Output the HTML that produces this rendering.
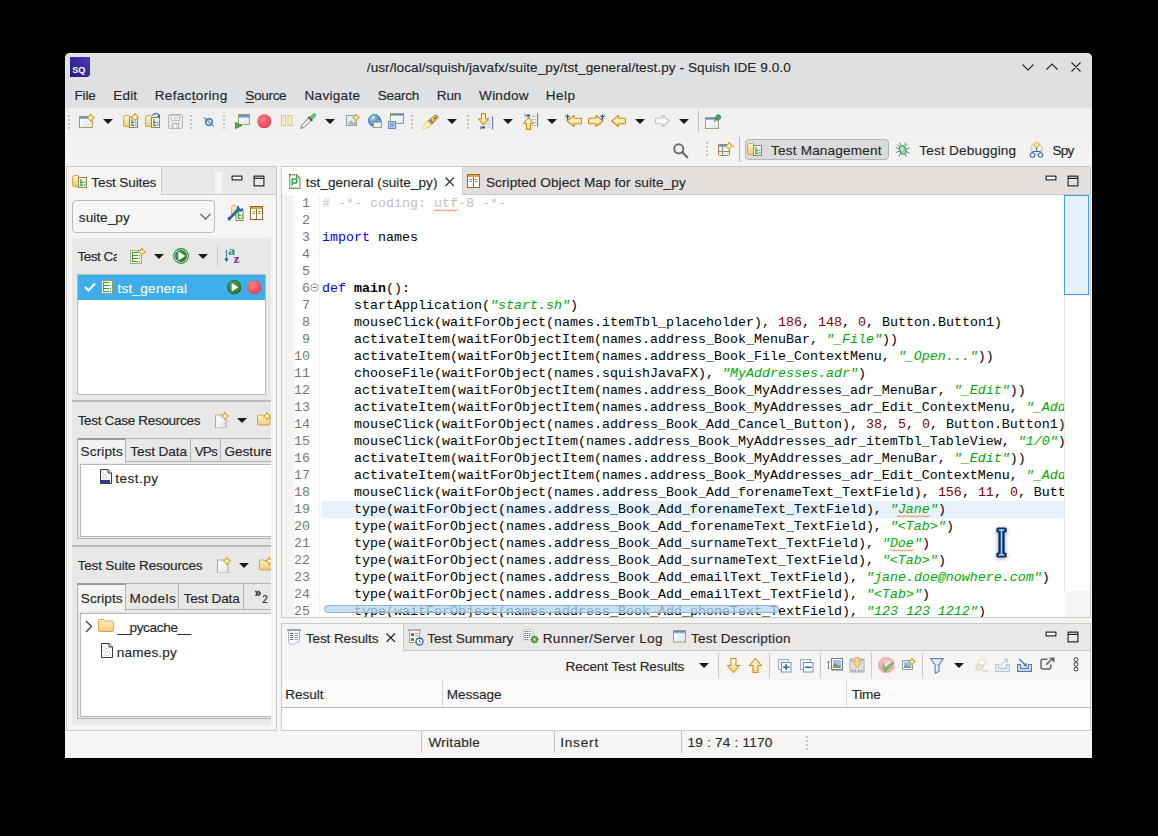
<!DOCTYPE html>
<html><head><meta charset="utf-8"><title>Squish IDE</title>
<style>*{box-sizing:border-box;margin:0;padding:0}
html,body{width:1158px;height:836px;background:#000;overflow:hidden}
body{position:relative;font-family:"Liberation Sans",sans-serif;font-size:13.6px;color:#232629}
.a{position:absolute}
.t{position:absolute;white-space:nowrap;line-height:20px;height:20px;font-size:13.6px;-webkit-text-stroke:.12px currentColor}
#win{left:65px;top:53px;width:1027px;height:705px;background:#f6f5f4;border-radius:5px 5px 0 0;overflow:hidden}
#tbar{left:0;top:0;width:1027px;height:55px;background:#dee0e2}
#tool{left:0;top:55px;width:1027px;height:58px;background:linear-gradient(#efeff0,#f5f4f3)}
.pane{border:1px solid #cfc9c4;background:#f6f5f4}
.hdr{background:#e9e8e6;border-bottom:1px solid #cfc9c4}
.mono{font-family:"Liberation Mono",monospace;font-size:13.333px}
#code{left:322px;top:195px;width:742px;height:422px;overflow:hidden}
#code div{height:17px;line-height:17px;white-space:pre;color:#000}
#ln{left:290px;top:195px;width:20px;height:422px;overflow:hidden;text-align:right;color:#787878}
#ln div{height:17px;line-height:17px}
.k{color:#0000ff}.s{color:#00aa00;font-style:italic}.n{color:#800000}.c{color:#c0c0c0}
.sq{}
u{text-underline-offset:1.5px}
.clip{position:absolute;overflow:hidden}
</style></head><body>
<svg width="0" height="0" style="position:absolute"><defs>
<linearGradient id="gb" x1="0" y1="0" x2="0" y2="1"><stop offset="0" stop-color="#3f7fc9"/><stop offset="1" stop-color="#a9cbee"/></linearGradient>
<linearGradient id="gw" x1="0" y1="0" x2="1" y2="1"><stop offset="0" stop-color="#ffffff"/><stop offset="1" stop-color="#dbe7f5"/></linearGradient>
<linearGradient id="gf" x1="0" y1="0" x2="0" y2="1"><stop offset="0" stop-color="#fdf1cc"/><stop offset="1" stop-color="#f2cb7a"/></linearGradient>
<linearGradient id="gy" x1="0" y1="0" x2="0" y2="1"><stop offset="0" stop-color="#fffdf0"/><stop offset="1" stop-color="#fbdb8a"/></linearGradient>
<radialGradient id="gr" cx="0.4" cy="0.35" r="0.7"><stop offset="0" stop-color="#f7848c"/><stop offset="1" stop-color="#e63c4a"/></radialGradient>
<radialGradient id="gg" cx="0.4" cy="0.35" r="0.7"><stop offset="0" stop-color="#4fa653"/><stop offset="1" stop-color="#1f7230"/></radialGradient>
<radialGradient id="gl" cx="0.35" cy="0.3" r="0.8"><stop offset="0" stop-color="#9fd0f5"/><stop offset="1" stop-color="#2d6fb8"/></radialGradient>
</defs></svg>
<div id="win" class="a">
 <div id="tbar" class="a"></div>
 <div id="tool" class="a"></div>
</div>
<svg class="a" style="left:70px;top:57px;" width="20" height="20" viewBox="0 0 20 20"><defs><linearGradient id="gsq" x1="1" y1="0" x2="0" y2="1"><stop offset="0" stop-color="#4a3bb0"/><stop offset="1" stop-color="#2a1488"/></linearGradient></defs><path d="M0 0h20v18l-2 2H0z" fill="url(#gsq)"/><text x="2.300" y="16.300" font-family="Liberation Sans" font-weight="bold" font-size="9.200" fill="#fff" letter-spacing="-.2">SQ</text></svg>
<div class="t" style="left:366.80px;top:58px;letter-spacing:0.054px;">/usr/local/squish/javafx/suite_py/tst_general/test.py - Squish IDE 9.0.0</div>
<svg class="a" style="left:1020px;top:60px" width="64" height="14" viewBox="0 0 64 14"><path d="M2.500 4.500L8 10L13.500 4.500M26.500 9.500L32 4L37.500 9.500M51.500 2.500L60.500 11.500M60.500 2.500L51.500 11.500" fill="none" stroke="#232629" stroke-width="1.100"/></svg>
<div class="t" style="left:74.50px;top:86px;letter-spacing:-0.217px;">File</div>
<div class="t" style="left:113.30px;top:86px;letter-spacing:0.117px;">Edit</div>
<div class="t" style="left:154.70px;top:86px;letter-spacing:0.305px;">Refac<u>t</u>oring</div>
<div class="t" style="left:245.30px;top:86px;letter-spacing:-0.34px;"><u>S</u>ource</div>
<div class="t" style="left:304.50px;top:86px;letter-spacing:0.271px;">Navigate</div>
<div class="t" style="left:377.65px;top:86px;letter-spacing:-0.28px;">Search</div>
<div class="t" style="left:436.70px;top:86px;letter-spacing:-0.1px;">Run</div>
<div class="t" style="left:479.10px;top:86px;letter-spacing:0.21px;">Window</div>
<div class="t" style="left:545.70px;top:86px;letter-spacing:0.5px;">Help</div>
<!--TOOLBAR-->
<svg class="a" style="left:68px;top:114.5px;" width="2" height="16" viewBox="0 0 2 16"><rect x="0" y="0" width="2" height="2" fill="#cdc3b3"/><rect x="0" y="4" width="2" height="2" fill="#cdc3b3"/><rect x="0" y="8" width="2" height="2" fill="#cdc3b3"/><rect x="0" y="12" width="2" height="2" fill="#cdc3b3"/></svg><svg class="a" style="left:79px;top:113px;" width="16" height="16" viewBox="0 0 16 16"><rect x="0.5" y="3.5" width="13" height="11" fill="url(#gw)" stroke="#ad976c"/><rect x="1" y="4" width="12" height="2" fill="url(#gb)"/><path d="M4 14C9 13.500 12.500 11 13 7" fill="none" stroke="#f5dc8a" stroke-width="1.400" opacity=".85"/><path d="M11.7 1.1999999999999997Q12.708 3.792 15.299999999999999 4.8Q12.708 5.808 11.7 8.4Q10.691999999999998 5.808 8.1 4.8Q10.691999999999998 3.792 11.7 1.1999999999999997Z" fill="#fffdf0" stroke="#d6a420" stroke-width="1.100" stroke-linejoin="round"/></svg><svg class="a" style="left:103.0px;top:119.3px;" width="10" height="5" viewBox="0 0 10 5"><path d="M0 0H10L5.0 5Z" fill="#1a1a1a"/></svg><svg class="a" style="left:123px;top:113px;" width="16" height="16" viewBox="0 0 16 16"><path d="M0.5 4.5q0-2 2-2h2.500q2 0 2 2v.300h.500v7.200q0 1.500-1.500 1.500h-4q-1.500 0-1.500-1.500z" fill="url(#gf)" stroke="#d9a045"/><path d="M1.5 5h5" stroke="#fff6dc" stroke-width="1"/><rect x="6.5" y="4.5" width="8" height="10" fill="url(#gw)" stroke="#9c8742"/><path d="M8.9 6v6.3h2.300M8.9 9.3h2.300" stroke="#2f9e44" stroke-width="1.200" fill="none"/><rect x="12.2" y="8.7" width="1.100" height="1.200" fill="#2f9e44"/><rect x="12.2" y="11.1" width="1.100" height="1.200" fill="#2f9e44"/><path d="M12 0.2999999999999998Q13.036 2.9639999999999995 15.7 4Q13.036 5.0360000000000005 12 7.7Q10.964 5.0360000000000005 8.3 4Q10.964 2.9639999999999995 12 0.2999999999999998Z" fill="#fffdf0" stroke="#d6a420" stroke-width="1.100" stroke-linejoin="round"/></svg><svg class="a" style="left:145px;top:112px;" width="16" height="17" viewBox="0 0 16 17"><path d="M0.5 5.5q0-2 2-2h2.500q2 0 2 2v.300h.500v7.200q0 1.500-1.500 1.500h-4q-1.500 0-1.500-1.500z" fill="url(#gf)" stroke="#d9a045"/><path d="M1.5 6h5" stroke="#fff6dc" stroke-width="1"/><rect x="6.5" y="5.5" width="8" height="10" fill="url(#gw)" stroke="#9c8742"/><path d="M8.9 7v6.3h2.300M8.9 10.3h2.300" stroke="#2f9e44" stroke-width="1.200" fill="none"/><rect x="12.2" y="9.7" width="1.100" height="1.200" fill="#2f9e44"/><rect x="12.2" y="12.1" width="1.100" height="1.200" fill="#2f9e44"/><path d="M7.500 3.500q3-4 6.500-.5" fill="none" stroke="#3b6fb0" stroke-width="1.300"/><path d="M15.300 5.300l-3.300-.3 2.600-2.600z" fill="#274b85"/></svg><svg class="a" style="left:167.5px;top:114px;" width="15" height="15" viewBox="0 0 15 15"><path d="M.5 2q0-1.500 1.500-1.500h11q1.500 0 1.500 1.500v11q0 1.500-1.500 1.500h-11q-1.500 0-1.500-1.500z" fill="#e9e9e9" stroke="#b9b9b9"/><rect x="3.500" y="1.500" width="8" height="5" fill="#f7f7f7" stroke="#c2c2c2"/><path d="M5 3.500h5M5 5h5" stroke="#d0d0d0"/><rect x="4.500" y="9.500" width="6" height="5" fill="#dcdcdc" stroke="#b5b5b5"/><rect x="6" y="11" width="2" height="3" fill="#f4f4f4"/></svg><svg class="a" style="left:190px;top:114.5px;" width="2" height="16" viewBox="0 0 2 16"><rect x="0" y="0" width="2" height="2" fill="#cdc3b3"/><rect x="0" y="4" width="2" height="2" fill="#cdc3b3"/><rect x="0" y="8" width="2" height="2" fill="#cdc3b3"/><rect x="0" y="12" width="2" height="2" fill="#cdc3b3"/></svg>
<svg class="a" style="left:202.5px;top:115.5px;" width="12" height="12" viewBox="0 0 12 12"><circle cx="6" cy="6" r="3.300" fill="#cfe3f5" stroke="#3c78b5" stroke-width="1.500"/><path d="M1 1.500L11 10.500" stroke="#8a9098" stroke-width="1.300"/></svg><svg class="a" style="left:223px;top:114.5px;" width="2" height="16" viewBox="0 0 2 16"><rect x="0" y="0" width="2" height="2" fill="#cdc3b3"/><rect x="0" y="4" width="2" height="2" fill="#cdc3b3"/><rect x="0" y="8" width="2" height="2" fill="#cdc3b3"/><rect x="0" y="12" width="2" height="2" fill="#cdc3b3"/></svg><svg class="a" style="left:235px;top:113.5px;" width="15" height="15" viewBox="0 0 15 15"><rect x="3.5" y="0.5" width="11" height="10" fill="url(#gw)" stroke="#ad976c"/><rect x="4" y="1" width="10" height="3" fill="url(#gb)"/><path d="M.5 8.500L7 11.500L.5 14.500z" fill="#4caf50" stroke="#2e8b3a" stroke-width=".8"/></svg><svg class="a" style="left:256.7px;top:113.5px;" width="14.5" height="14.5" viewBox="0 0 14.5 14.5"><circle cx="7.25" cy="7.25" r="6.95" fill="url(#gr)"/></svg><svg class="a" style="left:281px;top:115px;" width="12" height="11" viewBox="0 0 12 11"><rect x=".5" y=".5" width="4" height="10" fill="#f8edc5" stroke="#dcc685"/><rect x="7" y=".5" width="4" height="10" fill="#f8edc5" stroke="#dcc685"/></svg><svg class="a" style="left:300px;top:113px;" width="16" height="16" viewBox="0 0 16 16"><path d="M.8 15.500L1.800 12L9 4.800L11.300 7.100L4.200 14.300z" fill="#fdfdfd" stroke="#7a7a7a" stroke-width="1"/><path d="M8.300 3.800L12.300 7.800" stroke="#4a4a4a" stroke-width="1.700"/><path d="M10 4.300L13 1.200q1.200-1 2.200 0t0 2.200L12 6.300z" fill="#69cc78" stroke="#2e9a48" stroke-width=".8"/></svg><svg class="a" style="left:325.0px;top:118.8px;" width="10" height="5" viewBox="0 0 10 5"><path d="M0 0H10L5.0 5Z" fill="#1a1a1a"/></svg>
<svg class="a" style="left:346px;top:113.5px;" width="14" height="12" viewBox="0 0 14 12"><rect x=".5" y="1.500" width="10" height="10" fill="#dfeaf6" stroke="#8ea4bd"/><path d="M1.500 10.500L5 6l2.500 3 1.500-1.500 1 1.500v1.500z" fill="#9fc08a"/><path d="M10 0.2999999999999998Q10.896 2.604 13.2 3.5Q10.896 4.396 10 6.7Q9.104 4.396 6.8 3.5Q9.104 2.604 10 0.2999999999999998Z" fill="#fffdf0" stroke="#d6a420" stroke-width="1.100" stroke-linejoin="round"/></svg><svg class="a" style="left:367.5px;top:113.5px;" width="14" height="14" viewBox="0 0 14 14"><circle cx="6.500" cy="6.500" r="6" fill="url(#gl)" stroke="#2a62a5" stroke-width=".8"/><path d="M3 3q2-2 4-1 1 2-1 3t-3 0z" fill="#bfe3a0" opacity=".85"/><rect x="5.5" y="6.5" width="8" height="7" fill="url(#gw)" stroke="#ad976c"/><rect x="6" y="7" width="7" height="2" fill="url(#gb)"/></svg><svg class="a" style="left:388px;top:113px;" width="16" height="16" viewBox="0 0 16 16"><rect x="2.5" y="0.5" width="13" height="10" fill="url(#gw)" stroke="#ad976c"/><rect x="3" y="1" width="12" height="2" fill="url(#gb)"/><rect x=".5" y="8.500" width="7" height="7" fill="#b8c9ea" stroke="#6d86c4"/><rect x="2" y="10" width="4" height="4" fill="#8fa6da"/></svg><svg class="a" style="left:411px;top:114.5px;" width="2" height="16" viewBox="0 0 2 16"><rect x="0" y="0" width="2" height="2" fill="#cdc3b3"/><rect x="0" y="4" width="2" height="2" fill="#cdc3b3"/><rect x="0" y="8" width="2" height="2" fill="#cdc3b3"/><rect x="0" y="12" width="2" height="2" fill="#cdc3b3"/></svg><svg class="a" style="left:421.5px;top:113.5px;" width="17" height="16" viewBox="0 0 17 16"><path d="M.8 14.800L2.500 10L6.300 6.800L9.800 10.300L6 13.500z" fill="#fff2bd" stroke="#f2bd45" stroke-width=".9" stroke-linejoin="round"/><path d="M1 14.600l1.300-2.600 1.500 1.500z" fill="#fffdf0"/><path d="M6.300 6.800L8.300 5L11.600 8.500L9.800 10.300z" fill="#8f8a84" stroke="#77726c" stroke-width=".6"/><path d="M8.300 5L13 1.200q2.300-.6 3.300 1.900L11.600 8.500z" fill="#f8c84a" stroke="#8a6a20" stroke-width=".8" stroke-linejoin="round"/><path d="M12.800 4.300L15.800 2" stroke="#6a5218" stroke-width=".7"/><circle cx="12.800" cy="4.300" r=".9" fill="#5a4412"/></svg><svg class="a" style="left:447.0px;top:118.8px;" width="10" height="5" viewBox="0 0 10 5"><path d="M0 0H10L5.0 5Z" fill="#1a1a1a"/></svg><svg class="a" style="left:467px;top:114.5px;" width="2" height="16" viewBox="0 0 2 16"><rect x="0" y="0" width="2" height="2" fill="#cdc3b3"/><rect x="0" y="4" width="2" height="2" fill="#cdc3b3"/><rect x="0" y="8" width="2" height="2" fill="#cdc3b3"/><rect x="0" y="12" width="2" height="2" fill="#cdc3b3"/></svg>
<svg class="a" style="left:478px;top:112.5px;" width="16" height="17" viewBox="0 0 16 17"><rect x="8.5" y="4.5" width="4.5" height="1" fill="#b4c2de"/><rect x="8.5" y="7.5" width="4.5" height="1" fill="#b4c2de"/><rect x="8.5" y="10.5" width="4.5" height="1" fill="#b4c2de"/><rect x="8.5" y="13.5" width="4.5" height="1" fill="#b4c2de"/><rect x="14" y="3.500" width="1.200" height="13" fill="#6d84a6"/><rect x="2" y="13" width="1" height="3.500" fill="#7d8fb0"/><rect x="3.500" y="13.500" width="3.500" height="2" fill="#2a4f9a"/><path d="M3.500 .6h4v5.400h2.900L5.500 11.800L.6 6h2.900z" fill="url(#gy)" stroke="#d08b0c" stroke-width="1.1" stroke-linejoin="round"/></svg><svg class="a" style="left:503.0px;top:119.0px;" width="10" height="5" viewBox="0 0 10 5"><path d="M0 0H10L5.0 5Z" fill="#1a1a1a"/></svg><svg class="a" style="left:522.5px;top:112.5px;" width="16" height="17" viewBox="0 0 16 17"><rect x="8.5" y="3" width="4.5" height="1" fill="#b4c2de"/><rect x="8.5" y="6" width="4.5" height="1" fill="#b4c2de"/><rect x="8.5" y="9" width="4.5" height="1" fill="#b4c2de"/><rect x="8.5" y="12" width="4.5" height="1" fill="#b4c2de"/><rect x="14" y=".5" width="1.200" height="13" fill="#6d84a6"/><rect x="1.500" y=".5" width="1" height="4" fill="#7d8fb0"/><rect x="3.500" y="1.500" width="3.500" height="2" fill="#2a4f9a"/><path d="M3.500 16.400h4v-5.900h2.900L5.500 4.500L.6 10.500h2.900z" fill="url(#gy)" stroke="#d08b0c" stroke-width="1.1" stroke-linejoin="round"/></svg><svg class="a" style="left:547.0px;top:119.0px;" width="10" height="5" viewBox="0 0 10 5"><path d="M0 0H10L5.0 5Z" fill="#1a1a1a"/></svg><svg class="a" style="left:565.3px;top:114px;" width="17" height="13" viewBox="0 0 17 13"><path d="M16.400 4.200v5.600h-7.400v2.700L2 7L9 1.500v2.700z" fill="url(#gy)" stroke="#d08b0c" stroke-width="1.1" stroke-linejoin="round"/><path d="M2.5 0.3v5.500M0.3 1.7l4.400 2.700M0.3 4.4l4.400-2.700" stroke="#24509a" stroke-width="1.100"/></svg><svg class="a" style="left:587.7px;top:114px;" width="17" height="13" viewBox="0 0 17 13"><path d="M.6 4.200v5.600h7.400v2.700L15 7L8 1.500v2.700z" fill="url(#gy)" stroke="#d08b0c" stroke-width="1.1" stroke-linejoin="round"/><path d="M14.5 0.3v5.500M12.3 1.7l4.400 2.700M12.3 4.4l4.400-2.700" stroke="#24509a" stroke-width="1.100"/></svg><svg class="a" style="left:610.5px;top:114px;" width="15" height="13" viewBox="0 0 15 13"><path d="M14.400 4.200v5.600h-6.900v2.700L.6 7L7.500 1.500v2.700z" fill="url(#gy)" stroke="#d08b0c" stroke-width="1.1" stroke-linejoin="round"/></svg><svg class="a" style="left:635.0px;top:119.0px;" width="10" height="5" viewBox="0 0 10 5"><path d="M0 0H10L5.0 5Z" fill="#1a1a1a"/></svg><svg class="a" style="left:655px;top:114px;" width="15" height="13" viewBox="0 0 15 13"><path d="M.6 4.200v5.600h6.900v2.700L14.400 7L7.500 1.500v2.700z" fill="#fafafa" stroke="#c3c3c3" stroke-width="1.1" stroke-linejoin="round"/></svg><svg class="a" style="left:679.0px;top:119.0px;" width="10" height="5" viewBox="0 0 10 5"><path d="M0 0H10L5.0 5Z" fill="#1a1a1a"/></svg>
<div class="a" style="left:698px;top:110px;width:1px;height:22px;background:#c4c4c4"></div><svg class="a" style="left:705px;top:114px;" width="16" height="15" viewBox="0 0 16 15"><rect x="0.5" y="3.5" width="13" height="11" fill="url(#gw)" stroke="#ad976c"/><rect x="1" y="4" width="12" height="2" fill="url(#gb)"/><path d="M9 8l2.500-3" stroke="#555" stroke-width="1"/><path d="M10 4.500l2-3.500q2-1 3.500 1t-.5 3l-3 1.500z" fill="#3fae49" stroke="#23803a" stroke-width=".7"/></svg>
<svg class="a" style="left:672.7px;top:142.6px;" width="16" height="16" viewBox="0 0 16 16"><circle cx="5.800" cy="5.800" r="4.600" fill="none" stroke="#6a6a6a" stroke-width="1.900"/><path d="M9.300 9.300L14.300 14.300" stroke="#6a6a6a" stroke-width="2.200" stroke-linecap="round"/></svg><svg class="a" style="left:706px;top:142.3px;" width="2" height="16" viewBox="0 0 2 16"><rect x="0" y="0" width="2" height="2" fill="#cdc3b3"/><rect x="0" y="4" width="2" height="2" fill="#cdc3b3"/><rect x="0" y="8" width="2" height="2" fill="#cdc3b3"/><rect x="0" y="12" width="2" height="2" fill="#cdc3b3"/></svg><svg class="a" style="left:717.5px;top:141.7px;" width="16" height="15" viewBox="0 0 16 15"><rect x=".5" y="2.500" width="11" height="11" rx="1" fill="#e6f3fc" stroke="#a28654"/><rect x="1" y="3" width="10" height="2.300" fill="url(#gb)"/><path d="M4.500 5.500v8M.5 9.500h11" stroke="#a28654" fill="none"/><path d="M11.3 0.2999999999999998Q12.336 2.9639999999999995 15.0 4Q12.336 5.0360000000000005 11.3 7.7Q10.264000000000001 5.0360000000000005 7.6000000000000005 4Q10.264000000000001 2.9639999999999995 11.3 0.2999999999999998Z" fill="#fffdf0" stroke="#d6a420" stroke-width="1.100" stroke-linejoin="round"/></svg><div class="a" style="left:739px;top:137px;width:1px;height:25px;background:#b6bac2"></div>
<div class="a" style="left:745px;top:139px;width:144px;height:21px;background:#dbdbdb;border:1px solid #b3b6b8;border-radius:4px"></div>
<svg class="a" style="left:746.5px;top:143px;" width="16" height="14" viewBox="0 0 16 14"><path d="M0.5 2.5q0-2 2-2h2.500q2 0 2 2v.300h.500v7.200q0 1.500-1.500 1.500h-4q-1.500 0-1.500-1.500z" fill="url(#gf)" stroke="#d9a045"/><path d="M1.5 3h5" stroke="#fff6dc" stroke-width="1"/><rect x="6.5" y="2.5" width="8" height="10" fill="url(#gw)" stroke="#9c8742"/><path d="M8.9 4v6.3h2.300M8.9 7.3h2.300" stroke="#2f9e44" stroke-width="1.200" fill="none"/><rect x="12.2" y="6.7" width="1.100" height="1.200" fill="#2f9e44"/><rect x="12.2" y="9.1" width="1.100" height="1.200" fill="#2f9e44"/></svg>
<div class="t" style="left:771.05px;top:141px;letter-spacing:0.175px;">Test Management</div>
<svg class="a" style="left:895px;top:141.8px;" width="16" height="16" viewBox="0 0 16 16"><path d="M7.500 8L3 2.500M7.500 8L12 2M7.500 8L.8 5.500M7.500 8L14.500 6M7.500 8L1 10.500M7.500 8L14.500 11M7.500 8L4 14.500M7.500 8L11.500 14.500M6 3L5 .8M9 3L10.500 .8" stroke="#2a8a6e" stroke-width=".9" fill="none"/><ellipse cx="7.700" cy="8" rx="3.100" ry="4.400" fill="#a9d9a3" stroke="#3a7d5a" stroke-width=".9" transform="rotate(-18 7.700 8)"/><ellipse cx="7" cy="6.500" rx="1.200" ry="1.800" fill="#d9f0d2" opacity=".8" transform="rotate(-18 7 6.500)"/></svg>
<div class="t" style="left:919.25px;top:141px;letter-spacing:0.188px;">Test Debugging</div>
<svg class="a" style="left:1029px;top:141.8px;" width="15" height="16" viewBox="0 0 15 16"><circle cx="7.500" cy="7" r="5.700" fill="none" stroke="#d9b44a" stroke-width=".9"/><circle cx="7.500" cy="2.800" r="2.600" fill="#fbe9a0" stroke="#d9a93a" stroke-width=".8"/><path d="M7.500 5.500v4M3.500 12V9.500h8V12" fill="none" stroke="#3c6cb4" stroke-width="1"/><circle cx="3.500" cy="13" r="2.200" fill="#f4f8ff" stroke="#3c6cb4" stroke-width="1.100"/><circle cx="11.500" cy="13" r="2.200" fill="#f4f8ff" stroke="#3c6cb4" stroke-width="1.100"/></svg>
<div class="t" style="left:1052.45px;top:141px;letter-spacing:-0.8px;">Spy</div>
<!--LEFT-->
<div class="a pane" style="left:66px;top:166px;width:211px;height:565px"></div>
<div class="a hdr" style="left:67px;top:167px;width:209px;height:28px"></div>
<div class="a" style="left:67px;top:167px;width:95px;height:28px;background:#f6f5f4;border-right:1px solid #cfc9c4"></div>
<div class="a" style="left:215px;top:172px;width:7px;height:22px;background:#f6f5f4"></div>
<svg class="a" style="left:71.5px;top:175px;" width="16" height="14" viewBox="0 0 16 14"><path d="M0.5 2.5q0-2 2-2h2.500q2 0 2 2v.300h.500v7.200q0 1.500-1.500 1.500h-4q-1.500 0-1.500-1.500z" fill="url(#gf)" stroke="#d9a045"/><path d="M1.5 3h5" stroke="#fff6dc" stroke-width="1"/><rect x="6.5" y="2.5" width="8" height="10" fill="url(#gw)" stroke="#9c8742"/><path d="M8.9 4v6.3h2.300M8.9 7.3h2.300" stroke="#2f9e44" stroke-width="1.200" fill="none"/><rect x="12.2" y="6.7" width="1.100" height="1.200" fill="#2f9e44"/><rect x="12.2" y="9.1" width="1.100" height="1.200" fill="#2f9e44"/></svg>
<div class="t" style="left:91.35px;top:173px;letter-spacing:-0.145px;">Test Suites</div>
<svg class="a" style="left:231px;top:175px;" width="12" height="6" viewBox="0 0 12 6"><rect x="1.100" y="1.100" width="9.800" height="3.800" fill="#fff" stroke="#fff" stroke-width="2.400" opacity=".75"/><rect x="1.100" y="1.100" width="9.800" height="3.800" fill="#fff" stroke="#1e2226" stroke-width="1.200"/></svg><svg class="a" style="left:253px;top:175px;" width="12" height="12" viewBox="0 0 12 12"><path d="M1.100 1.100h9.800v9.800h-9.800zM1.100 3.400h9.800" fill="none" stroke="#fff" stroke-width="2.400" opacity=".75"/><path d="M1.100 1.100h9.800v9.800h-9.800zM1.100 3.400h9.800" fill="none" stroke="#1e2226" stroke-width="1.200"/></svg>
<div class="a" style="left:72px;top:200px;width:143px;height:33px;background:#f7f6f5;border:1px solid #b9bcbe;border-radius:4px"></div>
<div class="t" style="left:78.80px;top:208px;letter-spacing:0.043px;">suite_py</div>
<svg class="a" style="left:199px;top:211px" width="13" height="11" viewBox="0 0 13 11"><path d="M1.500 2.800L6.500 8.200L11.500 2.800" fill="none" stroke="#4d5052" stroke-width="1.200"/></svg>
<svg class="a" style="left:226.5px;top:205px;" width="17" height="16" viewBox="0 0 17 16"><path d="M4.500 2.500q0-2 2-2h2q2 0 2 2v8h-6z" fill="url(#gf)" stroke="#dcb469"/><rect x="9.0" y="5.5" width="7" height="10" fill="url(#gw)" stroke="#9c8742"/><path d="M11.4 7v6.3h2.300M11.4 10.3h2.300" stroke="#2f9e44" stroke-width="1.200" fill="none"/><rect x="14.7" y="9.7" width="1.100" height="1.200" fill="#2f9e44"/><rect x="14.7" y="12.1" width="1.100" height="1.200" fill="#2f9e44"/><path d="M2.500 13.500L11.500 4.500" stroke="#2a66ad" stroke-width="2.500"/><path d="M9.800 5.200q-1-3 2.200-4.700l.2 2.500 1.800 1 2-1.200q.5 3.700-3.200 4.200z" fill="#2a66ad"/><path d="M3.800 12.200q1 3-2.200 3.800l-.2-1.500-1.200-.8 .6-1.200q1.500-1.300 3-.3z" fill="#2a66ad"/></svg><svg class="a" style="left:250px;top:206px;" width="13" height="14" viewBox="0 0 13 14"><rect x=".5" y=".5" width="12" height="13" fill="#fdfdfd" stroke="#8c6d2f"/><rect x="1" y="1" width="11" height="2" fill="#e9a03b"/><path d="M6.500 3v10.500" stroke="#8c6d2f"/><path d="M2.500 5.500h2.500M2.500 7.500h2.500M8 5.500h2.500M8 7.500h2.500" stroke="#a88a4a"/></svg>
<div class="a" style="left:72px;top:238px;width:199px;height:487px;background:#e8e8e7"></div>
<div class="a" style="left:72px;top:400px;width:199px;height:2px;background:#bcbcbc"></div>
<div class="a" style="left:72px;top:545px;width:199px;height:2px;background:#bcbcbc"></div>
<div class="clip" style="left:70px;top:240px;width:47px;height:30px"><div class="a" style="left:-70px;top:-240px"><div class="t" style="left:77.55px;top:247px;letter-spacing:-0.567px;">Test Cases</div></div></div>
<svg class="a" style="left:129.5px;top:248px;" width="16" height="16" viewBox="0 0 16 16"><rect x=".5" y="2.500" width="11" height="13" fill="#f5f6ea" stroke="#b5a872"/><path d="M2.500 4v10M2.500 4.500h5.500M2.500 7.500h5.500M2.500 10.500h5.500M2.500 13.500h5.500" stroke="#2f9e44" stroke-width="1" fill="none"/><path d="M9 7.500h1M9 10.500h1M9 13.500h1" stroke="#2f9e44"/><path d="M11.8 0.19999999999999973Q12.808000000000002 2.792 15.4 3.8Q12.808000000000002 4.808 11.8 7.4Q10.792 4.808 8.200000000000001 3.8Q10.792 2.792 11.8 0.19999999999999973Z" fill="#fffdf0" stroke="#d6a420" stroke-width="1.100" stroke-linejoin="round"/></svg><svg class="a" style="left:154.0px;top:254.0px;" width="10" height="5" viewBox="0 0 10 5"><path d="M0 0H10L5.0 5Z" fill="#1a1a1a"/></svg><svg class="a" style="left:172.8px;top:248px;" width="16" height="16" viewBox="0 0 16 16"><circle cx="8.0" cy="8.0" r="7.4" fill="#eef6ee" stroke="#2f8a3c" stroke-width="1.100"/><circle cx="8.0" cy="8.0" r="5.7" fill="url(#gg)" stroke="#1f6b2a" stroke-width=".6"/><path d="M5.4 3.4000000000000004L12.2 8.0L5.4 12.6z" fill="#fff"/></svg><svg class="a" style="left:198.0px;top:254.0px;" width="10" height="5" viewBox="0 0 10 5"><path d="M0 0H10L5.0 5Z" fill="#1a1a1a"/></svg><div class="a" style="left:217px;top:245px;width:1px;height:22px;background:#c4c4c4"></div><svg class="a" style="left:224px;top:247.3px;" width="18" height="18" viewBox="0 0 18 18"><path d="M2.500 3v11" fill="none" stroke="#3a7fb0" stroke-width="1.100"/><path d="M.3 11.500h4.400L2.500 15z" fill="#2a5f8a"/><text x="4.300" y="8.300" font-family="Liberation Serif" font-weight="bold" font-size="13.500" fill="#16907a">a</text><text x="9.500" y="16.400" font-family="Liberation Serif" font-weight="bold" font-size="13.500" fill="#8b2591">z</text></svg>
<div class="a" style="left:77px;top:274px;width:189px;height:121px;background:#fff;border:1px solid #b9b9b9"></div>
<div class="a" style="left:78px;top:275px;width:187px;height:25px;background:#3daee9"></div>
<svg class="a" style="left:84px;top:282px;" width="12" height="10" viewBox="0 0 12 10"><path d="M1 5L4.500 8.500L11 1.500" fill="none" stroke="#fff" stroke-width="2"/></svg><svg class="a" style="left:101px;top:280px;" width="12" height="14" viewBox="0 0 12 14"><rect x=".5" y=".5" width="11" height="13" fill="#f5f6ea" stroke="#a8955a"/><path d="M2.500 2v10M2.500 2.500h5.500M2.500 5.500h5.500M2.500 8.500h5.500M2.500 11.500h5.500" stroke="#2f9e44" stroke-width="1" fill="none"/><path d="M9 5.500h1M9 8.500h1M9 11.500h1" stroke="#2f9e44"/></svg>
<div class="t" style="left:117.45px;top:279px;letter-spacing:0.235px;color:#fff">tst_general</div>
<svg class="a" style="left:226.8px;top:280px;" width="14.5" height="14.5" viewBox="0 0 14.5 14.5"><circle cx="7.25" cy="7.25" r="6.85" fill="url(#gg)" stroke="#1f6b2a" stroke-width=".8"/><path d="M4.75 2.95L11.45 7.25L4.75 11.55z" fill="#fff"/></svg><svg class="a" style="left:246.8px;top:280px;" width="14.5" height="14.5" viewBox="0 0 14.5 14.5"><circle cx="7.25" cy="7.25" r="6.95" fill="url(#gr)"/></svg>
<div class="t" style="left:77.65px;top:411px;letter-spacing:-0.356px;">Test Case Resources</div>
<div class="clip" style="left:72px;top:405px;width:199px;height:30px"><div class="a" style="left:-72px;top:-405px"><svg class="a" style="left:214.6px;top:411.5px;" width="14" height="16" viewBox="0 0 14 16"><path d="M.5 3h10.500v13h-10.500z" fill="url(#gw)" stroke="#b5a97c"/><path d="M10 0.49999999999999956Q11.008000000000001 3.0919999999999996 13.6 4.1Q11.008000000000001 5.108 10 7.699999999999999Q8.991999999999999 5.108 6.4 4.1Q8.991999999999999 3.0919999999999996 10 0.49999999999999956Z" fill="#fffdf0" stroke="#d6a420" stroke-width="1.100" stroke-linejoin="round"/></svg><svg class="a" style="left:236.8px;top:418.0px;" width="10" height="5" viewBox="0 0 10 5"><path d="M0 0H10L5.0 5Z" fill="#1a1a1a"/></svg><svg class="a" style="left:257px;top:411.5px;" width="15" height="14" viewBox="0 0 15 14"><path d="M.5 4.500q0-1.500 1.500-1.500h2.500q1 0 1.500 1h5.500q1.500 0 1.500 1.500v6q0 1.500-1.500 1.500h-9.500q-1.500 0-1.500-1.500z" fill="url(#gf)" stroke="#d29a4a"/><path d="M10.3 0.49999999999999956Q11.308000000000002 3.0919999999999996 13.9 4.1Q11.308000000000002 5.108 10.3 7.699999999999999Q9.292 5.108 6.700000000000001 4.1Q9.292 3.0919999999999996 10.3 0.49999999999999956Z" fill="#fffdf0" stroke="#d6a420" stroke-width="1.100" stroke-linejoin="round"/></svg></div></div>
<div class="clip" style="left:77px;top:438px;width:194px;height:102px"><div class="a" style="left:-77px;top:-438px">
 <div class="a" style="left:77px;top:438px;width:194px;height:102px"><div class="a" style="left:0;top:0;width:300px;height:101px;border:1px solid #b4b4b4;background:#e8e8e7"></div><div class="a" style="left:1px;top:23px;width:300px;height:1px;background:#b4b4b4"></div><div class="a" style="left:1px;top:0px;width:48px;height:25px;background:#f3f3f2;border-top:2px solid #9a9a9a;border-right:1px solid #b4b4b4"></div><div class="a" style="left:113px;top:1px;width:1px;height:22px;background:#b4b4b4"></div><div class="a" style="left:143px;top:1px;width:1px;height:22px;background:#b4b4b4"></div><div class="a" style="left:3px;top:26px;width:300px;height:73px;background:#fff;border:1px solid #b9b9b9"></div></div>
 <div class="t" style="left:80.55px;top:442px;letter-spacing:0.108px;">Scripts</div><div class="t" style="left:130.25px;top:442px;letter-spacing:-0.081px;">Test Data</div><div class="t" style="left:194.75px;top:442px;letter-spacing:-0.975px;">VPs</div><div class="t" style="left:224.45px;top:442px;letter-spacing:0.0px;">Gestures</div>
 <svg class="a" style="left:100px;top:469px;" width="12" height="15" viewBox="0 0 12 15"><path d="M.5 .5h7.500l3.500 3.500v10.500h-11z" fill="#fbfbfb" stroke="#3a3a3a"/><path d="M8 .5v3.500h3.500" fill="#d8d8d8" stroke="#3a3a3a"/><path d="M2.500 4h1M5 5.500h1M2.500 7.500h1M6 8.500h1M3.500 10h1M8 11h1M2.500 12h1M5.500 12.500h1" stroke="#a89a6a"/><rect x="1" y="11" width="9" height="3" fill="#2b3f8c"/></svg><div class="t" style="left:115.35px;top:469px;letter-spacing:0.425px;">test.py</div>
</div></div>
<div class="t" style="left:77.55px;top:556px;letter-spacing:-0.176px;">Test Suite Resources</div>
<div class="clip" style="left:72px;top:550px;width:199px;height:30px"><div class="a" style="left:-72px;top:-550px"><svg class="a" style="left:216.6px;top:556.5px;" width="14" height="16" viewBox="0 0 14 16"><path d="M.5 3h10.500v13h-10.500z" fill="url(#gw)" stroke="#b5a97c"/><path d="M10 0.49999999999999956Q11.008000000000001 3.0919999999999996 13.6 4.1Q11.008000000000001 5.108 10 7.699999999999999Q8.991999999999999 5.108 6.4 4.1Q8.991999999999999 3.0919999999999996 10 0.49999999999999956Z" fill="#fffdf0" stroke="#d6a420" stroke-width="1.100" stroke-linejoin="round"/></svg><svg class="a" style="left:239.0px;top:563.0px;" width="10" height="5" viewBox="0 0 10 5"><path d="M0 0H10L5.0 5Z" fill="#1a1a1a"/></svg><svg class="a" style="left:259px;top:556.5px;" width="15" height="14" viewBox="0 0 15 14"><path d="M.5 4.500q0-1.500 1.500-1.500h2.500q1 0 1.500 1h5.500q1.500 0 1.500 1.500v6q0 1.500-1.500 1.500h-9.500q-1.500 0-1.500-1.500z" fill="url(#gf)" stroke="#d29a4a"/><path d="M10.3 0.49999999999999956Q11.308000000000002 3.0919999999999996 13.9 4.1Q11.308000000000002 5.108 10.3 7.699999999999999Q9.292 5.108 6.700000000000001 4.1Q9.292 3.0919999999999996 10.3 0.49999999999999956Z" fill="#fffdf0" stroke="#d6a420" stroke-width="1.100" stroke-linejoin="round"/></svg></div></div>
<div class="clip" style="left:77px;top:583px;width:194px;height:138px"><div class="a" style="left:-77px;top:-583px">
 <div class="a" style="left:77px;top:583px;width:194px;height:137px"><div class="a" style="left:0;top:0;width:300px;height:136px;border:1px solid #b4b4b4;background:#e8e8e7"></div><div class="a" style="left:1px;top:26px;width:300px;height:1px;background:#b4b4b4"></div><div class="a" style="left:1px;top:0px;width:48px;height:28px;background:#f3f3f2;border-top:2px solid #9a9a9a;border-right:1px solid #b4b4b4"></div><div class="a" style="left:101px;top:1px;width:1px;height:25px;background:#b4b4b4"></div><div class="a" style="left:166px;top:1px;width:1px;height:25px;background:#b4b4b4"></div><div class="a" style="left:3px;top:30px;width:300px;height:104px;background:#fff;border:1px solid #b9b9b9"></div></div>
 <div class="t" style="left:80.85px;top:589px;letter-spacing:0.025px;">Scripts</div><div class="t" style="left:129.60px;top:589px;letter-spacing:0.47px;">Models</div><div class="t" style="left:183.55px;top:589px;letter-spacing:-0.156px;">Test Data</div>
 <div class="t" style="left:254.500px;top:582.500px;font-size:12px;font-weight:bold;letter-spacing:-1.500px">»</div><div class="t" style="left:262.300px;top:589.500px;font-size:10px">2</div>
 <svg class="a" style="left:85px;top:619.7px;" width="8" height="13" viewBox="0 0 8 13"><path d="M1 1L6.500 6.500L1 12" fill="none" stroke="#3a3d40" stroke-width="1.300"/></svg><svg class="a" style="left:97.5px;top:618.7px;" width="16" height="13" viewBox="0 0 16 13"><path d="M.5 2q0-1.500 1.500-1.500h4l1.500 1.500h6.500q1.500 0 1.500 1.500v7.500q0 1.500-1.500 1.500h-12q-1.500 0-1.500-1.500z" fill="url(#gf)" stroke="#d6a64e"/></svg><div class="t" style="left:117.55px;top:618px;letter-spacing:-0.36px;"><span style="letter-spacing:-1.600px">__</span>pycache<span style="letter-spacing:-1.600px">__</span></div>
 <svg class="a" style="left:101px;top:642.5px;" width="12" height="15" viewBox="0 0 12 15"><path d="M.5 .5h7.500l3.500 3.500v10.500h-11z" fill="#fbfbfb" stroke="#3a3a3a"/><path d="M8 .5v3.500h3.500" fill="#d8d8d8" stroke="#3a3a3a"/><path d="M2.500 4h1M5 5.500h1M2.500 7.500h1M6 8.500h1M3.500 10h1M8 11h1M2.500 12h1M5.500 12.500h1" stroke="#a89a6a"/></svg><div class="t" style="left:116.80px;top:643px;letter-spacing:0.15px;">names.py</div>
</div></div>
<!--EDITOR-->
<div class="a pane" style="left:281px;top:166px;width:810px;height:452px;background:#fff"></div>
<div class="a" style="left:282px;top:167px;width:808px;height:28px;background:#e3dfdc;border-bottom:1px solid #cdc7c2"></div>
<div class="a" style="left:282px;top:167px;width:181px;height:28px;background:#fff;border-right:1px solid #cfc9c4"></div>
<svg class="a" style="left:288.5px;top:174px;" width="12" height="15" viewBox="0 0 12 15"><path d="M.75 .75h7L11 4v10.250h-10.250z" fill="#fff" stroke="#5d7f3c" stroke-width="1.300" stroke-dasharray="1.500 .6"/><path d="M7.500 1v3h3" fill="none" stroke="#5d7f3c"/><path d="M3.300 11.500V5h2.600q2 0 2 2t-2 2H3.300" fill="none" stroke="#2bb24c" stroke-width="1.700"/></svg>
<div class="t" style="left:305.85px;top:173px;letter-spacing:0.04px;">tst_general (suite_py)</div>
<svg class="a" style="left:444.8px;top:176.8px;" width="9.5" height="9.5" viewBox="0 0 9.5 9.5"><path d="M.5 .5L9.0 9.0M9.0 .5L.5 9.0" stroke="#232629" stroke-width="1.2"/></svg>
<svg class="a" style="left:467px;top:174px;" width="13" height="14" viewBox="0 0 13 14"><rect x=".5" y=".5" width="12" height="13" fill="#fdfdfd" stroke="#8c6d2f"/><rect x="1" y="1" width="11" height="2" fill="#e9a03b"/><path d="M6.500 3v10.500" stroke="#8c6d2f"/><path d="M2.500 5.500h2.500M2.500 7.500h2.500M8 5.500h2.500M8 7.500h2.500" stroke="#a88a4a"/></svg>
<div class="t" style="left:485.95px;top:173px;letter-spacing:0.082px;">Scripted Object Map for suite_py</div>
<svg class="a" style="left:1045px;top:175px;" width="12" height="6" viewBox="0 0 12 6"><rect x="1.100" y="1.100" width="9.800" height="3.800" fill="#fff" stroke="#fff" stroke-width="2.400" opacity=".75"/><rect x="1.100" y="1.100" width="9.800" height="3.800" fill="#fff" stroke="#1e2226" stroke-width="1.200"/></svg><svg class="a" style="left:1067px;top:175px;" width="12" height="12" viewBox="0 0 12 12"><path d="M1.100 1.100h9.800v9.800h-9.800zM1.100 3.400h9.800" fill="none" stroke="#fff" stroke-width="2.400" opacity=".75"/><path d="M1.100 1.100h9.800v9.800h-9.800zM1.100 3.400h9.800" fill="none" stroke="#1e2226" stroke-width="1.200"/></svg>
<div class="a" style="left:282px;top:195px;width:12px;height:422px;background:#f5f4f3"></div>
<div class="a" style="left:319px;top:195px;width:1px;height:422px;background:#f1f1f1"></div>
<div id="code" class="a mono">
<div><span class="c"># -*- coding: <span class="sq">utf</span>-8 -*-</span></div>
<div> </div>
<div><span class="k">import</span> names</div>
<div> </div>
<div> </div>
<div><span class="k">def</span> <b>main</b>():</div>
<div>    startApplication(<span class="s">"start.sh"</span>)</div>
<div>    mouseClick(waitForObject(names.itemTbl_placeholder), <span class="n">186</span>, <span class="n">148</span>, <span class="n">0</span>, Button.Button1)</div>
<div>    activateItem(waitForObjectItem(names.address_Book_MenuBar, <span class="s">"_File"</span>))</div>
<div>    activateItem(waitForObjectItem(names.address_Book_File_ContextMenu, <span class="s">"_Open..."</span>))</div>
<div>    chooseFile(waitForObject(names.squishJavaFX), <span class="s">"MyAddresses.adr"</span>)</div>
<div>    activateItem(waitForObjectItem(names.address_Book_MyAddresses_adr_MenuBar, <span class="s">"_Edit"</span>))</div>
<div>    activateItem(waitForObjectItem(names.address_Book_MyAddresses_adr_Edit_ContextMenu, <span class="s">"_Add..."</span>))</div>
<div>    mouseClick(waitForObject(names.address_Book_Add_Cancel_Button), <span class="n">38</span>, <span class="n">5</span>, <span class="n">0</span>, Button.Button1)</div>
<div>    mouseClick(waitForObjectItem(names.address_Book_MyAddresses_adr_itemTbl_TableView, <span class="s">"1/0"</span>))</div>
<div>    activateItem(waitForObjectItem(names.address_Book_MyAddresses_adr_MenuBar, <span class="s">"_Edit"</span>))</div>
<div>    activateItem(waitForObjectItem(names.address_Book_MyAddresses_adr_Edit_ContextMenu, <span class="s">"_Add..."</span>))</div>
<div>    mouseClick(waitForObject(names.address_Book_Add_forenameText_TextField), <span class="n">156</span>, <span class="n">11</span>, <span class="n">0</span>, Button.Button1)</div>
<div style="background:#e8f2fe">    type(waitForObject(names.address_Book_Add_forenameText_TextField), <span class="s">"<span class="sq">Jane</span>"</span>)</div>
<div>    type(waitForObject(names.address_Book_Add_forenameText_TextField), <span class="s">"&lt;Tab&gt;"</span>)</div>
<div>    type(waitForObject(names.address_Book_Add_surnameText_TextField), <span class="s">"<span class="sq">Doe</span>"</span>)</div>
<div>    type(waitForObject(names.address_Book_Add_surnameText_TextField), <span class="s">"&lt;Tab&gt;"</span>)</div>
<div>    type(waitForObject(names.address_Book_Add_emailText_TextField), <span class="s">"jane.doe@nowhere.com"</span>)</div>
<div>    type(waitForObject(names.address_Book_Add_emailText_TextField), <span class="s">"&lt;Tab&gt;"</span>)</div>
<div>    type(waitForObject(names.address_Book_Add_phoneText_TextField), <span class="s">"123 123 1212"</span>)</div>
</div>
<svg class="a" style="left:434px;top:209.4px;" width="24" height="3" viewBox="0 0 24 3"><polyline points="0.0,2.2 1.5,0.6 3.0,2.2 4.5,0.6 6.0,2.2 7.5,0.6 9.0,2.2 10.5,0.6 12.0,2.2 13.5,0.6 15.0,2.2 16.5,0.6 18.0,2.2 19.5,0.6 21.0,2.2 22.5,0.6 24.0,2.2" fill="none" stroke="#f5793a" stroke-width=".9"/></svg><svg class="a" style="left:897px;top:515.4px;" width="34" height="3" viewBox="0 0 34 3"><polyline points="0.0,2.2 1.5,0.6 3.0,2.2 4.5,0.6 6.0,2.2 7.5,0.6 9.0,2.2 10.5,0.6 12.0,2.2 13.5,0.6 15.0,2.2 16.5,0.6 18.0,2.2 19.5,0.6 21.0,2.2 22.5,0.6 24.0,2.2 25.5,0.6 27.0,2.2 28.5,0.6 30.0,2.2 31.5,0.6 33.0,2.2" fill="none" stroke="#f5793a" stroke-width=".9"/></svg><svg class="a" style="left:889.5px;top:549.4px;" width="24.5" height="3" viewBox="0 0 24.5 3"><polyline points="0.0,2.2 1.5,0.6 3.0,2.2 4.5,0.6 6.0,2.2 7.5,0.6 9.0,2.2 10.5,0.6 12.0,2.2 13.5,0.6 15.0,2.2 16.5,0.6 18.0,2.2 19.5,0.6 21.0,2.2 22.5,0.6 24.0,2.2" fill="none" stroke="#f5793a" stroke-width=".9"/></svg>
<div id="ln" class="a mono">
<div>1</div>
<div>2</div>
<div>3</div>
<div>4</div>
<div>5</div>
<div>6</div>
<div>7</div>
<div>8</div>
<div>9</div>
<div>10</div>
<div>11</div>
<div>12</div>
<div>13</div>
<div>14</div>
<div>15</div>
<div>16</div>
<div>17</div>
<div>18</div>
<div>19</div>
<div>20</div>
<div>21</div>
<div>22</div>
<div>23</div>
<div>24</div>
<div>25</div>
</div>
<svg class="a" style="left:310px;top:283px" width="9" height="9" viewBox="0 0 9 9"><circle cx="4.500" cy="4.500" r="3.800" fill="#fff" stroke="#8f8f8f" stroke-width=".9"/><path d="M2.500 4.500h4" stroke="#6a6a6a" stroke-width="1"/></svg>
<div class="a" style="left:1064px;top:195px;width:1px;height:396px;background:#e4e4e4"></div>
<div class="a" style="left:1065px;top:591px;width:25px;height:26px;background:#f6f5f4"></div>
<div class="a" style="left:1064px;top:195px;width:25px;height:100px;background:#e6f1fd;border:1px solid #419cf5"></div>
<div class="a" style="left:324px;top:605px;width:455px;height:8px;background:rgba(183,216,240,0.78);border:1px solid #8fb3cc;border-radius:4px"></div>
<svg class="a" style="left:996px;top:527px;filter:drop-shadow(0 1px 2px rgba(0,0,0,.4))" width="11" height="31" viewBox="0 0 11 31"><rect x=".3" y=".5" width="10.400" height="5" rx="1.600" fill="#06326f"/><rect x=".3" y="25.500" width="10.400" height="5" rx="1.600" fill="#06326f"/><rect x="2.400" y="3" width="6.200" height="25" fill="#06326f"/><path d="M2.600 3h5.800M5.500 3v25M2.600 28h5.800" stroke="#b9d0f0" stroke-width="1.600" fill="none"/></svg>
<!--BOTTOM-->
<div class="a pane" style="left:281px;top:623px;width:810px;height:108px;background:#f6f5f4"></div>
<div class="a hdr" style="left:282px;top:624px;width:808px;height:27px;background:#e9e8e6"></div>
<div class="a" style="left:282px;top:624px;width:122px;height:27px;background:#f6f5f4;border-right:1px solid #cfc9c4"></div>
<svg class="a" style="left:287px;top:629px;" width="14" height="17" viewBox="0 0 14 17"><path d="M1.500 1.500h11v11.500q-2.500-.5-4 1t-3.500 1.500q-2.500 0-3.500-2z" fill="#fbfcff" stroke="#a9b6d2"/><rect x="0" y="0" width="14" height="2" fill="#92a4c4"/><path d="M3 4.500h3M3 8.500h3" stroke="#e5383b" stroke-width="1"/><path d="M3 6.500h3M3 10.500h3" stroke="#2f9e44" stroke-width="1"/><path d="M7.500 4.500h3.500M7.500 6.500h3.500M7.500 8.500h3.500M7.500 10.500h3.500" stroke="#94a0bb" stroke-width="1"/></svg>
<div class="t" style="left:305.85px;top:629px;letter-spacing:-0.132px;">Test Results</div>
<svg class="a" style="left:386px;top:632.5px;" width="9.5" height="9.5" viewBox="0 0 9.5 9.5"><path d="M.5 .5L9.0 9.0M9.0 .5L.5 9.0" stroke="#232629" stroke-width="1.2"/></svg>
<svg class="a" style="left:408px;top:629px;" width="16" height="17" viewBox="0 0 16 17"><rect x="1.500" y="1.500" width="10" height="12" fill="#fbfbfb" stroke="#b3a27c"/><rect x="0" y="0" width="13" height="2" fill="#a9b4cc"/><rect x="3" y="4" width="3" height="3" fill="#e5383b"/><rect x="3" y="9" width="3" height="3" fill="#2f9e44"/><path d="M7 4.500h3.500M7 6.500h3.500" stroke="#9aa3b5"/><circle cx="11.500" cy="12.500" r="3.500" fill="#f7faff" stroke="#2f62a8" stroke-width="1.300"/><path d="M11.500 10.500v2.200l1.300 .8" stroke="#2f62a8" fill="none" stroke-width="1"/></svg>
<div class="t" style="left:427.35px;top:629px;letter-spacing:-0.082px;">Test Summary</div>
<svg class="a" style="left:522.5px;top:629px;" width="17" height="16" viewBox="0 0 17 16"><rect x=".5" y=".5" width="9.500" height="11.500" fill="#fffef6" stroke="#d6cfb0"/><path d="M1.500 2.500h7M1.500 4.500h7M1.500 6.500h7M1.500 8.500h5M1.500 10.500h4" stroke="#4b6fb5" stroke-width="1" stroke-dasharray="1.500 .7"/><path d="M11.500 6.500v8M7.500 10.500h8M8.700 7.700l5.600 5.600M14.300 7.700l-5.600 5.600" stroke="#2f6b2a" stroke-width="1.300"/><circle cx="11.500" cy="10.500" r="2.600" fill="#86c440" stroke="#2f6b2a" stroke-width=".8"/><circle cx="11.500" cy="10.500" r="1" fill="#f4ffe0"/></svg>
<div class="t" style="left:542.70px;top:629px;letter-spacing:0.306px;">Runner/Server Log</div>
<svg class="a" style="left:672.5px;top:630.3px;" width="13" height="13" viewBox="0 0 13 13"><rect x="0.5" y="0.5" width="12" height="11.5" fill="url(#gw)" stroke="#ad976c"/><rect x="1" y="1" width="11" height="2.5" fill="url(#gb)"/></svg>
<div class="t" style="left:691.05px;top:629px;letter-spacing:0.187px;">Test Description</div>
<svg class="a" style="left:1045px;top:631.3px;" width="12" height="6" viewBox="0 0 12 6"><rect x="1.100" y="1.100" width="9.800" height="3.800" fill="#fff" stroke="#fff" stroke-width="2.400" opacity=".75"/><rect x="1.100" y="1.100" width="9.800" height="3.800" fill="#fff" stroke="#1e2226" stroke-width="1.200"/></svg><svg class="a" style="left:1067px;top:631.3px;" width="12" height="12" viewBox="0 0 12 12"><path d="M1.100 1.100h9.800v9.800h-9.800zM1.100 3.400h9.800" fill="none" stroke="#fff" stroke-width="2.400" opacity=".75"/><path d="M1.100 1.100h9.800v9.800h-9.800zM1.100 3.400h9.800" fill="none" stroke="#1e2226" stroke-width="1.200"/></svg>
<div class="t" style="left:565.50px;top:657px;letter-spacing:-0.097px;">Recent Test Results</div>
<svg class="a" style="left:699.0px;top:663.0px;" width="10" height="5" viewBox="0 0 10 5"><path d="M0 0H10L5.0 5Z" fill="#1a1a1a"/></svg><div class="a" style="left:718px;top:653px;width:1px;height:25px;background:#c9c9c9"></div><svg class="a" style="left:726.5px;top:657.5px;" width="13" height="15" viewBox="0 0 13 15"><path d="M4 .5h5v7h3.500L6.500 14.500L.5 7.500H4z" fill="url(#gy)" stroke="#d08b0c" stroke-width="1.1" stroke-linejoin="round"/></svg><svg class="a" style="left:748.5px;top:657.5px;" width="13" height="15" viewBox="0 0 13 15"><path d="M4 14.500h5v-7h3.500L6.500 .5L.5 7.500H4z" fill="url(#gy)" stroke="#d08b0c" stroke-width="1.1" stroke-linejoin="round"/></svg><div class="a" style="left:769px;top:653px;width:1px;height:25px;background:#c9c9c9"></div><svg class="a" style="left:777.5px;top:658.5px;" width="14" height="14" viewBox="0 0 14 14"><rect x=".5" y=".5" width="10" height="10" fill="#eef3fb" stroke="#9bb0d6"/><rect x="3.500" y="3.500" width="9.500" height="9.500" fill="#fdfeff" stroke="#6f8fc9"/><path d="M5 8.200h6.500" stroke="#2a5fa8" stroke-width="1.500"/><path d="M8 5v6" stroke="#2a5fa8" stroke-width="1.500"/></svg><svg class="a" style="left:799.5px;top:658.5px;" width="14" height="14" viewBox="0 0 14 14"><rect x=".5" y=".5" width="10" height="10" fill="#eef3fb" stroke="#9bb0d6"/><rect x="3.500" y="3.500" width="9.500" height="9.500" fill="#fdfeff" stroke="#6f8fc9"/><path d="M5 8.200h6.500" stroke="#2a5fa8" stroke-width="1.500"/></svg><div class="a" style="left:820px;top:653px;width:1px;height:25px;background:#c9c9c9"></div>
<svg class="a" style="left:827px;top:658px;" width="16" height="13" viewBox="0 0 16 13"><path d="M1.500 4v6M.5 4q1 0 1-1M.5 10q1 0 1 1M2.500 4q-1 0-1-1M2.500 10q-1 0-1 1" stroke="#555" stroke-width=".7" fill="none"/><rect x="4.500" y=".5" width="11" height="11" fill="#fdfdfd" stroke="#7c7c7c"/><rect x="6" y="2" width="8" height="8" fill="#9ec3e6"/><path d="M6 10V7l2.500-2 2.500 3 1.500-1 1.500 1.500v1.500z" fill="#7f9a6a"/><path d="M5 12.500h11" stroke="#bbb"/></svg><svg class="a" style="left:849px;top:657px;" width="16" height="16" viewBox="0 0 16 16"><rect x="1" y="2" width="14" height="13" fill="#e6e6e6" stroke="#a9a9a9"/><path d="M2.500 3.500h1.500M5.500 3.500h1.500M9 3.500h1.500M12 3.500h1.500M2.500 13.500h1.500M5.500 13.500h1.500M9 13.500h1.500M12 13.500h1.500" stroke="#888" stroke-width="1.600"/><rect x="3" y="5" width="10" height="7" fill="#d9dde3"/><path d="M6 .5h4v4.500h2.500L8 10.500L3.500 5H6z" fill="#f7d78f" stroke="#d9a440" stroke-width=".8"/></svg><div class="a" style="left:871px;top:653px;width:1px;height:25px;background:#c9c9c9"></div><svg class="a" style="left:877.7px;top:657px;" width="17" height="16" viewBox="0 0 17 16"><path d="M5 .5h6.500L16 5v6.500L11.500 15.500H5L.5 11V5z" fill="#f5a3a3" stroke="#f0b9b9" stroke-width=".8"/><path d="M5.500 1.500h5.500l3.500 3.500-8 3-4 .5v-3.500z" fill="#fbd0d0" opacity=".7"/><path d="M4 6.500L7 9.500L11.500 4.500" stroke="#fff" stroke-width="1.600" fill="none" opacity=".85"/><path d="M4.300 5.500l3 5.500q3.500-3.500 9-5.500-5 4-9.300 10z" fill="#5fd06a" stroke="#3aa84a" stroke-width=".5"/></svg><svg class="a" style="left:901.5px;top:658px;" width="14" height="12" viewBox="0 0 14 12"><rect x=".5" y="2.500" width="10" height="9" fill="#e8eef5" stroke="#8e9fb5"/><rect x="2" y="4" width="7" height="6" fill="#9ec3e6"/><path d="M2 10V8l2-1.500 2.500 2 1-1 1.500 1v1.500z" fill="#8aa07a"/><path d="M10 0.20000000000000018Q10.924 2.576 13.3 3.5Q10.924 4.424 10 6.8Q9.076 4.424 6.7 3.5Q9.076 2.576 10 0.20000000000000018Z" fill="#fffdf0" stroke="#d6a420" stroke-width="1.100" stroke-linejoin="round"/></svg><div class="a" style="left:922px;top:653px;width:1px;height:25px;background:#c9c9c9"></div><svg class="a" style="left:929.5px;top:657.5px;" width="14" height="16" viewBox="0 0 14 16"><defs><linearGradient id="gfu" x1="0" y1="0" x2="1" y2="0"><stop offset="0" stop-color="#fafdff"/><stop offset="1" stop-color="#c4e9f8"/></linearGradient></defs><path d="M.7 .7h12.600L9 7v6.300L5.200 15.300V7z" fill="url(#gfu)" stroke="#6c80b2" stroke-width="1.200" stroke-linejoin="round"/><path d="M7 7h2" stroke="#6c80b2" stroke-width="1"/></svg><svg class="a" style="left:954.0px;top:663.0px;" width="10" height="5" viewBox="0 0 10 5"><path d="M0 0H10L5.0 5Z" fill="#1a1a1a"/></svg>
<svg class="a" style="left:975px;top:658.7px;" width="14" height="13" viewBox="0 0 14 13"><path d="M5 .6h5.200q1 0 .6 1L7.300 10q-.4 1-1.400 1H1.200q-1 0-.6-1L4 1.600q.4-1 1-1z" fill="#ece4d6" stroke="#d9cfbd" stroke-width=".8"/><path d="M5 1h5.500L9 5H3.500z" fill="#fbf8f2"/><path d="M7.500 12h5.500" stroke="#cfc5b2" stroke-width="1"/></svg><svg class="a" style="left:994.7px;top:658.3px;" width="15" height="14" viewBox="0 0 15 14"><path d="M.6 6.500v6.900h13.800V6.500h-3v3.900h-7.800V6.500z" fill="#e4ebf6" stroke="#b4c6e3" stroke-width="1.100"/><path d="M2.100 7v4.900h10.800V7" fill="none" stroke="#fff" stroke-width=".7" opacity=".8"/><path d="M5.500 7.500L12 1.500M8.800 1.200h3.500v3.500" fill="none" stroke="#9cc0e0" stroke-width="1"/></svg><svg class="a" style="left:1017px;top:658.3px;" width="15" height="14" viewBox="0 0 15 14"><path d="M.6 6.500v6.900h13.800V6.500h-3v3.900h-7.800V6.500z" fill="#c6d4ee" stroke="#5676b6" stroke-width="1.100"/><path d="M2.100 7v4.900h10.800V7" fill="none" stroke="#fff" stroke-width=".7" opacity=".8"/><path d="M2 1L9 7.500" fill="none" stroke="#2a86b6" stroke-width="1.200"/><path d="M10 8.500l-4-.6 3.400-3.200z" fill="#2a86b6"/></svg><svg class="a" style="left:1039.5px;top:657.3px;" width="15" height="13" viewBox="0 0 15 13"><path d="M7.500 2.300H2.800q-1.800 0-1.800 1.800v6q0 1.800 1.800 1.800h6.200q1.800 0 1.800-1.800V7.500" fill="none" stroke="#686868" stroke-width="1.500"/><path d="M6.300 7.600L12 2" stroke="#686868" stroke-width="1.700"/><path d="M9 .5h5.500v5.500z" fill="#686868"/></svg><svg class="a" style="left:1073.2px;top:657px;" width="6" height="15" viewBox="0 0 6 15"><circle cx="3" cy="2.500" r="1.900" fill="#fff" stroke="#222" stroke-width=".9"/><circle cx="3" cy="7.300" r="1.900" fill="#fff" stroke="#222" stroke-width=".9"/><circle cx="3" cy="12.100" r="1.900" fill="#fff" stroke="#222" stroke-width=".9"/></svg>
<div class="a" style="left:282px;top:680px;width:808px;height:28px;background:#fbfbfb;border-bottom:1px solid #bababa"></div>
<div class="a" style="left:282px;top:708px;width:808px;height:22px;background:#fff"></div>
<div class="a" style="left:442px;top:680px;width:1px;height:27px;background:#d4d4d4"></div>
<div class="a" style="left:846px;top:680px;width:1px;height:27px;background:#d4d4d4"></div>
<div class="t" style="left:285.30px;top:685px;letter-spacing:-0.06px;">Result</div>
<div class="t" style="left:446.80px;top:685px;letter-spacing:-0.05px;">Message</div>
<div class="t" style="left:851.75px;top:685px;letter-spacing:-0.25px;">Time</div>
<!--STATUS-->
<div class="a" style="left:421px;top:731px;width:1px;height:22px;background:#c4c4c4"></div><div class="a" style="left:554px;top:731px;width:1px;height:22px;background:#c4c4c4"></div><div class="a" style="left:681px;top:731px;width:1px;height:22px;background:#c4c4c4"></div>
<div class="t" style="left:428.50px;top:733px;letter-spacing:0.243px;">Writable</div>
<div class="t" style="left:560.15px;top:733px;letter-spacing:0.81px;">Insert</div>
<div class="t" style="left:687.60px;top:733px;letter-spacing:0.208px;">19 : 74 : 1170</div>
<svg class="a" style="left:806px;top:736px;" width="2" height="16" viewBox="0 0 2 16"><rect x="0" y="0" width="2" height="2" fill="#c8c8c8"/><rect x="0" y="4" width="2" height="2" fill="#c8c8c8"/><rect x="0" y="8" width="2" height="2" fill="#c8c8c8"/><rect x="0" y="12" width="2" height="2" fill="#c8c8c8"/></svg>
</body></html>
